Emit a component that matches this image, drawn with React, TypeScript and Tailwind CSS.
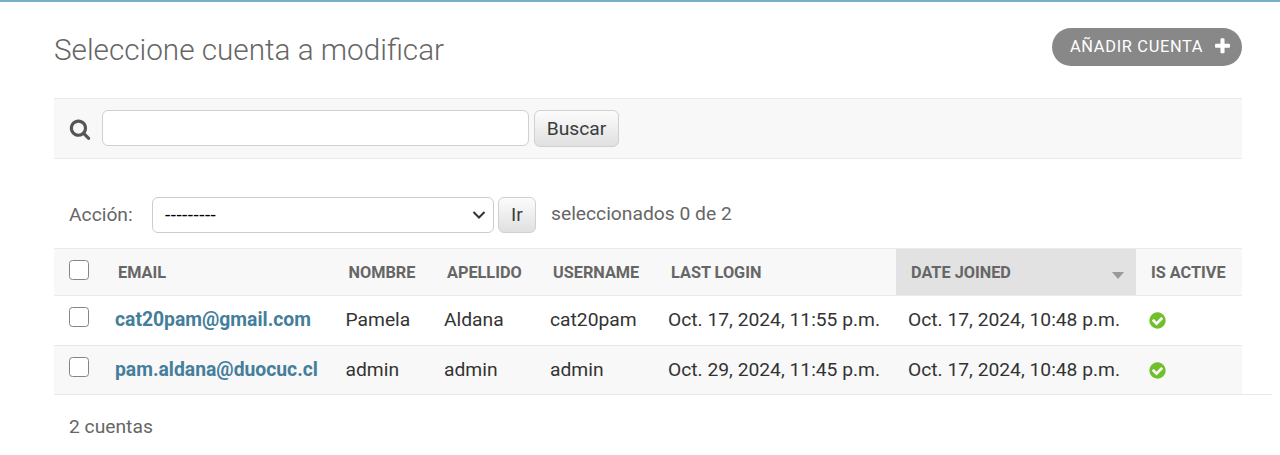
import React from "react";

const GRID = "grid grid-cols-[49px_230.5px_98.5px_106px_118px_240px_1fr_106px]";

const accounts = [
  { email: "cat20pam@gmail.com", first: "Pamela", last: "Aldana", user: "cat20pam", login: "Oct. 17, 2024, 11:55 p.m.", joined: "Oct. 17, 2024, 10:48 p.m." },
  { email: "pam.aldana@duocuc.cl", first: "admin", last: "admin", user: "admin", login: "Oct. 29, 2024, 11:45 p.m.", joined: "Oct. 17, 2024, 10:48 p.m." },
];

function SearchIcon() {
  return (
    <svg className="h-[22px] w-[22px] shrink-0" viewBox="0 0 1792 1792" fill="#555555">
      <path d="M1216 832q0-185-131.5-316.5t-316.5-131.5-316.5 131.5-131.5 316.5 131.5 316.5 316.5 131.5 316.5-131.5 131.5-316.5zm512 832q0 52-38 90t-90 38q-54 0-90-38l-343-342q-179 124-399 124-143 0-273.5-55.5t-225-150-150-225-55.5-273.5 55.5-273.5 150-225 225-150 273.5-55.5 273.5 55.5 225 150 150 225 55.5 273.5q0 220-124 399l343 343q37 37 37 90z" />
    </svg>
  );
}

function PlusIcon() {
  return (
    <svg className="mb-px h-[19px] w-[19px] shrink-0" viewBox="0 0 1792 1792" fill="#ffffff">
      <path d="M1600 736v192q0 40-28 68t-68 28h-416v416q0 40-28 68t-68 28h-192q-40 0-68-28t-28-68v-416h-416q-40 0-68-28t-28-68v-192q0-40 28-68t68-28h416v-416q0-40 28-68t68-28h192q40 0 68 28t28 68v416h416q40 0 68 28t28 68z" />
    </svg>
  );
}

function YesIcon() {
  return (
    <svg className="h-[19px] w-[19px]" viewBox="0 0 1792 1792" fill="#70bf2b">
      <path d="M1412 734q0-28-18-46l-91-90q-19-19-45-19t-45 19l-408 407-226-226q-19-19-45-19t-45 19l-91 90q-18 18-18 46 0 27 18 45l362 362q19 19 45 19 27 0 46-19l543-543q18-18 18-45zm252 162q0 209-103 385.5t-279.5 279.5-385.5 103-385.5-103-279.5-279.5-103-385.5 103-385.5 279.5-279.5 385.5-103 385.5 103 279.5 279.5 103 385.5z" />
    </svg>
  );
}

function Checkbox() {
  return <input type="checkbox" className="block h-5 w-5 appearance-none rounded-[3.5px] border-[1.5px] border-[#858585] bg-white" />;
}

function HeadCell({ children }: { children: React.ReactNode }) {
  return <div className="whitespace-nowrap pl-[15px] pt-[13px]">{children}</div>;
}

function Cell({ children }: { children: React.ReactNode }) {
  return <div className="whitespace-nowrap pl-3 pt-[12px]">{children}</div>;
}

export default function App() {
  return (
    <div className="h-[455px] overflow-hidden border-t-2 border-[#79aec8] bg-white font-['Roboto',sans-serif] text-[19.25px] leading-6 text-[#333]">
      <div className="pl-[54px] pr-[38px]">
        <header className="flex h-24 justify-between">
          <h1 className="pt-[30px] text-[29.68px] font-light leading-9 text-[#666]">Seleccione cuenta a modificar</h1>
          <a className="mt-[26px] flex h-[38px] w-[190px] items-center justify-between rounded-full bg-[#888] pl-[18px] pr-[10px] text-[16.4px] tracking-[0.67px] text-white">
            <span className="whitespace-nowrap">AÑADIR CUENTA</span>
            <PlusIcon />
          </a>
        </header>

        <form className="flex h-[61px] items-start border-y border-[#ebebeb] bg-[#f8f8f8] pl-[15px] pt-[11px]">
          <div className="flex h-9 items-center pt-px"><SearchIcon /></div>
          <input type="text" className="ml-[11px] h-9 w-[427px] rounded-md border border-[#d0d0d0] bg-white" />
          <button type="button" className="ml-[5px] h-[37px] w-[85px] rounded-md border border-[#d0d0d0] bg-linear-to-b from-[#fcfcfc] to-[#e0e0e0] text-center text-[#3c3c3c]">Buscar</button>
        </form>

        <div className="flex h-[89px] items-start pl-[15px] pt-[38px] text-[#666]">
          <label className="w-[83px] pt-[6px]">Acción:</label>
          <div className="flex h-9 w-[342px] items-center justify-between rounded-md border border-[#ccc] bg-white pl-3 pr-[7px] text-black">
            <span className="text-[19px] tracking-[0.45px]">---------</span>
            <svg className="h-[14px] w-[14px]" viewBox="0 0 14 14" fill="none" stroke="#333" strokeWidth="2">
              <path d="M1.5 4 7 9.5 12.5 4" />
            </svg>
          </div>
          <button type="button" className="ml-1 h-9 w-[38px] rounded-md border border-[#d0d0d0] bg-linear-to-b from-[#fcfcfc] to-[#e0e0e0] text-[#3c3c3c]">Ir</button>
          <span className="pl-[15px] pt-[5px]">seleccionados 0 de 2</span>
        </div>

        <div className={`${GRID} h-12 border-y border-[#ebebeb] bg-[#f8f8f8] text-[16.27px] font-bold leading-[22px] text-[#666]`}>
          <div className="pl-[15px] pt-[11px]"><Checkbox /></div>
          <HeadCell>EMAIL</HeadCell>
          <HeadCell>NOMBRE</HeadCell>
          <HeadCell>APELLIDO</HeadCell>
          <HeadCell>USERNAME</HeadCell>
          <HeadCell>LAST LOGIN</HeadCell>
          <div className="flex justify-between bg-[#e2e2e2] pl-[15px] pr-3 pt-[13px]">
            <span>DATE JOINED</span>
            <svg className="mt-[10px] h-[7px] w-3" viewBox="0 0 12 7" fill="#999"><path d="M0 0h12L6 7z" /></svg>
          </div>
          <HeadCell>IS ACTIVE</HeadCell>
        </div>

        {accounts.map((a, i) => (
          <div key={a.email} className={i === 0 ? `${GRID} h-[49px] bg-white` : `${GRID} h-[50px] border-y border-[#e8e8e8] bg-[#f8f8f8]`}>
            <div className="pl-[15px] pt-[11px]"><Checkbox /></div>
            <Cell><a className="text-[19.32px] font-bold text-[#447e9b]">{a.email}</a></Cell>
            <Cell>{a.first}</Cell>
            <Cell>{a.last}</Cell>
            <Cell>{a.user}</Cell>
            <Cell>{a.login}</Cell>
            <Cell>{a.joined}</Cell>
            <div className="pl-3 pt-[15px]"><YesIcon /></div>
          </div>
        ))}
      </div>
      <footer className="ml-[54px] mr-2 -mt-px border-t border-[#eaeaea] pl-[15px] pt-5 text-[#666]">2 cuentas</footer>
    </div>
  );
}
